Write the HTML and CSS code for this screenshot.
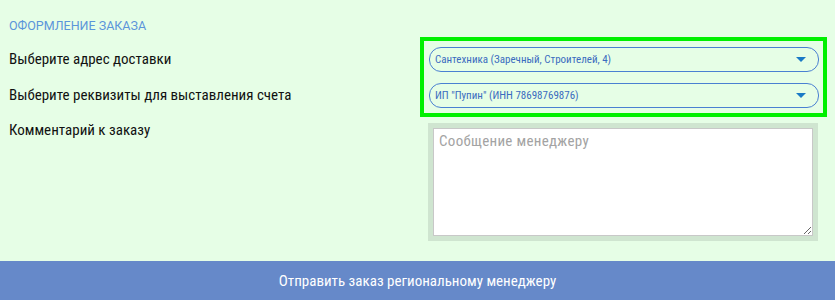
FILE: index.html
```html
<!DOCTYPE html>
<html lang="ru">
<head>
    <meta charset="UTF-8">
    <title>Оформление заказа</title>
    <link rel="stylesheet" href="styles.css">
</head>
<body>
<section class="order">
    <h2 class="order-title">Оформление заказа</h2>
    <div class="order-form">
        <div class="order-labels">
            <div class="order-label">Выберите адрес доставки</div>
            <div class="order-label">Выберите реквизиты для выставления счета</div>
            <div class="order-label">Комментарий к заказу</div>
        </div>
        <div class="order-fields">
            <div class="selects">
                <div class="select">
                    <span>Сантехника (Заречный, Строителей, 4)</span>
                    <span class="select-arrow"></span>
                </div>
                <div class="select">
                    <span>ИП "Пупин" (ИНН 78698769876)</span>
                    <span class="select-arrow"></span>
                </div>
            </div>
            <div class="comment-box">
                <textarea class="comment" placeholder="Сообщение менеджеру"></textarea>
            </div>
        </div>
    </div>
</section>
<button class="send-btn" type="button">Отправить заказ региональному менеджеру</button>
</body>
</html>
```

FILE: styles.css
```css
body {
    margin: 0;
    background-color: #e6fee6;
    font-family: 'Roboto Condensed', 'Roboto', sans-serif;
    color: #111;
}
.order {
    padding: 18px 8px 0 9px;
    height: 243px;
    box-sizing: border-box;
}
.order-title {
    margin: 0;
    font-family: 'Roboto', sans-serif;
    font-size: 12.5px;
    line-height: 16px;
    font-weight: normal;
    text-transform: uppercase;
    color: #5b95da;
}
.order-form {
    display: grid;
    grid-template-columns: 411px 407px;
    margin-top: 3px;
}
.order-labels {
    padding-top: 5px;
}
.order-label {
    font-size: 15px;
    line-height: 35.5px;
}
.selects {
    border: 4px solid #00f000;
    padding: 6px 4px 5px 5px;
    display: flex;
    flex-direction: column;
    gap: 11px;
}
.select {
    height: 25px;
    box-sizing: border-box;
    border: 1px solid #4a80d2;
    border-radius: 12px;
    display: flex;
    align-items: center;
    justify-content: space-between;
    padding: 0 12px 0 5px;
    font-size: 11px;
    color: #3b6cc0;
}
.select-arrow {
    width: 0;
    height: 0;
    border-left: 5px solid transparent;
    border-right: 5px solid transparent;
    border-top: 5px solid #1a7ac6;
}
.comment-box {
    margin: 6px 0 0 8px;
    width: 390px;
    padding: 5px;
    box-sizing: border-box;
    background-color: #cfe5d0;
}
.comment {
    display: block;
    width: 100%;
    height: 108px;
    box-sizing: border-box;
    border: 1px solid #c8c8c8;
    padding: 3px 5px;
    font-family: 'Roboto Condensed', 'Roboto', sans-serif;
    font-size: 15px;
    letter-spacing: 0.3px;
    resize: vertical;
    margin: 0;
}
.comment::placeholder {
    color: #a3a3a3;
}
.send-btn {
    display: block;
    width: 100%;
    height: 39px;
    margin-top: 18px;
    border: none;
    background-color: #6689c9;
    color: white;
    font-family: 'Roboto Condensed', 'Roboto', sans-serif;
    font-size: 15px;
    cursor: pointer;
}
```
